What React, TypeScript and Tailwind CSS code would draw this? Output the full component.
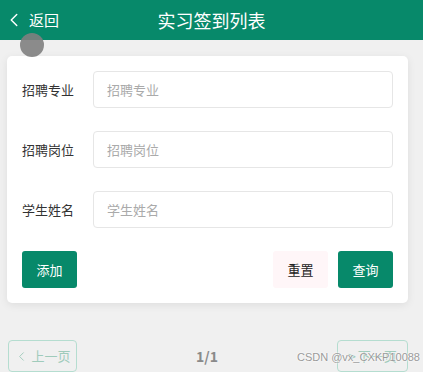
import { ChevronLeft } from "lucide-react";

const fields = [
  { label: "招聘专业", name: "major" },
  { label: "招聘岗位", name: "position" },
  { label: "学生姓名", name: "student" },
];

export default function App() {
  return (
    <div
      className="relative w-[423px] h-[372px] overflow-hidden bg-[#f0f0f0]"
      style={{ fontFamily: '"Noto Sans CJK SC", "Noto Sans", sans-serif' }}
    >
      {/* 顶部栏 */}
      <div className="relative flex items-center h-[40px] bg-[#07896a] text-white">
        <div className="flex items-center pl-[3px] gap-[4px]">
          <ChevronLeft size={22} strokeWidth={1.6} />
          <span className="text-[15px]">返回</span>
        </div>
        <div className="absolute inset-x-0 text-center text-[18px] pointer-events-none">
          实习签到列表
        </div>
      </div>

      {/* 悬浮按钮 */}
      <div className="absolute left-[20px] top-[33px] w-[24px] h-[24px] rounded-full bg-[#7f7f7f] opacity-90" />

      {/* 搜索卡片 */}
      <div className="ml-[7px] w-[401px] mt-[16px] bg-white rounded-[5px] shadow-[0_2px_8px_rgba(0,0,0,0.08)] px-[15px] pt-[15px] pb-[15px]">
        <div className="flex flex-col gap-[23px]">
          {fields.map((f) => (
            <div key={f.name} className="flex items-center">
              <label className="w-[71px] shrink-0 text-[13px] text-[#333]">{f.label}</label>
              <input
                name={f.name}
                placeholder={f.label}
                className="flex-1 min-w-0 h-[37px] px-[13px] text-[13px] text-[#333] border border-[#e6e6e6] rounded-[4px] outline-none placeholder:text-[#aaa]"
              />
            </div>
          ))}
          <div className="flex items-center">
            <button className="w-[55px] h-[37px] rounded-[3px] bg-[#07896a] text-white text-[13px]">添加</button>
            <div className="flex-1" />
            <button className="w-[55px] h-[37px] rounded-[3px] bg-[#fff6f8] text-[#222] text-[13px]">重置</button>
            <button className="ml-[10px] w-[55px] h-[37px] rounded-[3px] bg-[#07896a] text-white text-[13px]">查询</button>
          </div>
        </div>
      </div>

      {/* 分页 */}
      <div className="flex items-center justify-between ml-[8px] w-[400px] mt-[37px]">
        <button className="flex items-center justify-center gap-[2px] w-[69px] h-[32px] rounded-[4px] border border-[#b5ddd0] text-[#9fcbbb] text-[13px]">
          <ChevronLeft size={15} strokeWidth={1.5} />
          上一页
        </button>
        <span className="text-[14px] font-semibold text-[#8a8a8a]">1/1</span>
        <button className="flex items-center justify-center gap-[2px] w-[71px] h-[32px] rounded-[4px] border border-[#b5ddd0] text-[#9fcbbb] text-[13px]">
          <span className="text-[14px]">&gt;</span>
          下一页
        </button>
      </div>

      {/* 水印 */}
      <div
        className="absolute right-[3px] bottom-[9px] text-[11px] text-[#9a9a9a] leading-none"
        style={{ fontFamily: '"Liberation Sans", sans-serif', textShadow: "0 0 2px #fff, 0 0 2px #fff" }}
      >
        CSDN @vx_CXKP10088
      </div>
    </div>
  );
}
